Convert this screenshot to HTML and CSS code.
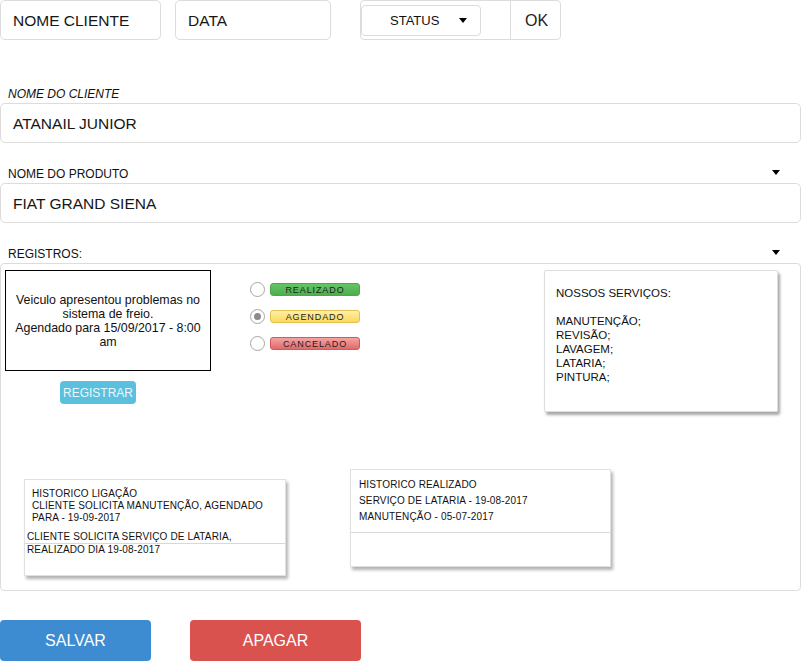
FILE: index.html
```html
<!DOCTYPE html>
<html lang="pt">
<head>
<meta charset="utf-8">
<title>Cliente</title>
<link rel="stylesheet" href="styles.css">
</head>
<body>
<div class="page">
  <div class="toolbar">
    <div class="box box-nome">NOME CLIENTE</div>
    <div class="box box-data">DATA</div>
    <div class="group">
      <div class="status">STATUS <span class="caret"></span></div>
      <div class="ok">OK</div>
    </div>
  </div>

  <div class="field first">
    <div class="label italic">NOME DO CLIENTE</div>
    <div class="box wide">ATANAIL JUNIOR</div>
  </div>

  <div class="field">
    <div class="label">NOME DO PRODUTO <span class="caret"></span></div>
    <div class="box wide">FIAT GRAND SIENA</div>
  </div>

  <div class="field">
    <div class="label">REGISTROS: <span class="caret"></span></div>
    <div class="panel">
      <div class="panel-top">
        <div class="left-col">
          <div class="note">Veiculo apresentou problemas no<br>sistema de freio.<br>Agendado para 15/09/2017 - 8:00<br>am</div>
          <button class="btn-registrar">REGISTRAR</button>
        </div>
        <div class="radios">
          <label class="radio-row"><input type="radio" name="st"><span class="pill green">REALIZADO</span></label>
          <label class="radio-row"><input type="radio" name="st" checked><span class="pill yellow">AGENDADO</span></label>
          <label class="radio-row"><input type="radio" name="st"><span class="pill red">CANCELADO</span></label>
        </div>
        <div class="services">NOSSOS SERVIÇOS:<br><br>MANUTENÇÃO;<br>REVISÃO;<br>LAVAGEM;<br>LATARIA;<br>PINTURA;</div>
      </div>
      <div class="panel-bottom">
        <div class="hist hist1">
          <div class="hist1-top">HISTORICO LIGAÇÃO<br>CLIENTE SOLICITA MANUTENÇÃO, AGENDADO<br>PARA - 19-09-2017</div>
          <div class="hist1-line">CLIENTE SOLICITA SERVIÇO DE LATARIA,</div>
          <div class="hist1-line divided">REALIZADO DIA 19-08-2017</div>
        </div>
        <div class="hist hist2">
          <div class="hist2-top">HISTORICO REALIZADO<br>SERVIÇO DE LATARIA - 19-08-2017<br>MANUTENÇÃO - 05-07-2017</div>
        </div>
      </div>
    </div>
  </div>

  <div class="actions">
    <button class="btn btn-salvar">SALVAR</button>
    <button class="btn btn-apagar">APAGAR</button>
  </div>
</div>
</body>
</html>
```

FILE: styles.css
```css
* { box-sizing: border-box; }
html, body { margin: 0; padding: 0; background: #fff; }
body {
  font-family: "Liberation Sans", Arial, sans-serif;
  color: #111;
  width: 801px;
}
.page { width: 801px; }

.toolbar { display: flex; align-items: flex-start; height: 40px; }
.box {
  height: 40px;
  border: 1px solid #dcdcdc;
  border-radius: 5px;
  font-size: 15.5px;
  line-height: 39px;
  padding-left: 12px;
  color: #161616;
}
.box-nome { width: 161px; }
.box-data { width: 156px; margin-left: 14px; }
.group {
  margin-left: 29px;
  width: 201px;
  height: 40px;
  border: 1px solid #dcdcdc;
  border-radius: 4px;
  display: flex;
}
.status {
  margin-top: 4px;
  width: 120px;
  height: 31px;
  border: 1px solid #dcdcdc;
  border-radius: 4px;
  font-size: 13px;
  line-height: 29px;
  padding-left: 28px;
  display: flex;
  align-items: center;
  color: #111;
}
.status .caret { margin-left: 20px; }
.ok {
  margin-left: 29px;
  border-left: 1px solid #dcdcdc;
  flex: 1;
  font-size: 16px;
  line-height: 39px;
  padding-left: 14px;
  color: #222;
}
.caret {
  display: inline-block;
  width: 0; height: 0;
  border-left: 4.5px solid transparent;
  border-right: 4.5px solid transparent;
  border-top: 5px solid #000;
}

.field { margin-top: 20px; }
.field.first { margin-top: 43px; }
.label {
  height: 20px;
  font-size: 12px;
  line-height: 20px;
  padding-left: 8px;
  padding-top: 1px;
  color: #111;
  display: flex;
  align-items: center;
}
.label .caret { margin-left: auto; margin-right: 21px; margin-top: -3px; }
.italic { font-style: italic; }
.box.wide { width: 801px; }

.panel {
  width: 801px;
  height: 328px;
  border: 1px solid #dcdcdc;
  border-radius: 4px;
  padding: 6px 22px 0 4px;
}
.panel-top { display: flex; align-items: flex-start; height: 141px; }
.left-col { width: 206px; display: flex; flex-direction: column; }
.note {
  width: 206px;
  height: 101px;
  border: 1px solid #000;
  font-size: 12.4px;
  line-height: 14px;
  text-align: center;
  display: flex;
  align-items: center;
  justify-content: center;
  color: #111;
}
.btn-registrar {
  margin: 10px 0 0 55px;
  width: 76px;
  height: 23px;
  background: #5bc0de;
  border: none;
  border-radius: 4px;
  color: #eaf7fc;
  font-family: "Liberation Sans", Arial, sans-serif;
  font-size: 12px;
  padding: 0;
}
.radios {
  margin-left: 39px;
  margin-top: 12px;
  display: flex;
  flex-direction: column;
  gap: 12px;
}
.radio-row { display: flex; align-items: center; height: 15px; }
.radio-row input {
  -webkit-appearance: none;
  appearance: none;
  margin: 0;
  width: 15px;
  height: 15px;
  border: 1px solid #a6a6a6;
  border-radius: 50%;
  background: #fff;
  position: relative;
}
.radio-row input:checked::after {
  content: "";
  position: absolute;
  left: 3px; top: 3px;
  width: 7px; height: 7px;
  border-radius: 50%;
  background: #8a8a8a;
}
.pill {
  margin-left: 5px;
  width: 90px;
  height: 13px;
  border-radius: 3px;
  font-size: 9px;
  line-height: 12px;
  letter-spacing: 0.9px;
  text-align: center;
  color: #222;
  border: 1px solid;
}
.green { background: linear-gradient(#66c466, #4cae4c); border-color: #4aa84a; }
.yellow { background: linear-gradient(#fff0a8, #fbd95c); border-color: #e3c050; }
.red { background: linear-gradient(#f6a3a3, #e26868); border-color: #cf5a5a; }

.services {
  margin-left: auto;
  width: 234px;
  height: 142px;
  border: 1px solid #dedede;
  border-radius: 2px;
  box-shadow: 2px 3px 3px rgba(0,0,0,0.35);
  font-size: 11.5px;
  line-height: 14px;
  padding: 15px 0 0 11px;
  color: #111;
}

.panel-bottom { display: flex; align-items: flex-start; }
.hist {
  background: #fff;
  border: 1px solid #e0e0e0;
  box-shadow: 2px 3px 3px rgba(0,0,0,0.3);
  font-size: 10px;
  letter-spacing: 0.15px;
  color: #111;
}
.hist1 {
  margin-left: 19px;
  margin-top: 68px;
  width: 262px;
  height: 97px;
  padding-top: 8px;
}
.hist1-top { padding-left: 7px; line-height: 12px; margin-bottom: 7px; }
.hist1-line { padding-left: 2px; line-height: 12px; }
.hist1-line.divided { border-top: 1px solid #d8d8d8; }
.hist2 {
  margin-left: 64px;
  margin-top: 58px;
  width: 261px;
  height: 98px;
}
.hist2-top {
  padding: 7px 0 7px 8px;
  line-height: 16px;
  border-bottom: 1px solid #dadada;
}

.actions { display: flex; margin-top: 29px; }
.btn {
  height: 41px;
  border: none;
  border-radius: 4px;
  color: #fff;
  font-family: "Liberation Sans", Arial, sans-serif;
  font-size: 16px;
  padding: 0;
}
.btn-salvar { width: 151px; background: #3d8bd0; }
.btn-apagar { width: 171px; margin-left: 39px; background: #da524e; }
```
